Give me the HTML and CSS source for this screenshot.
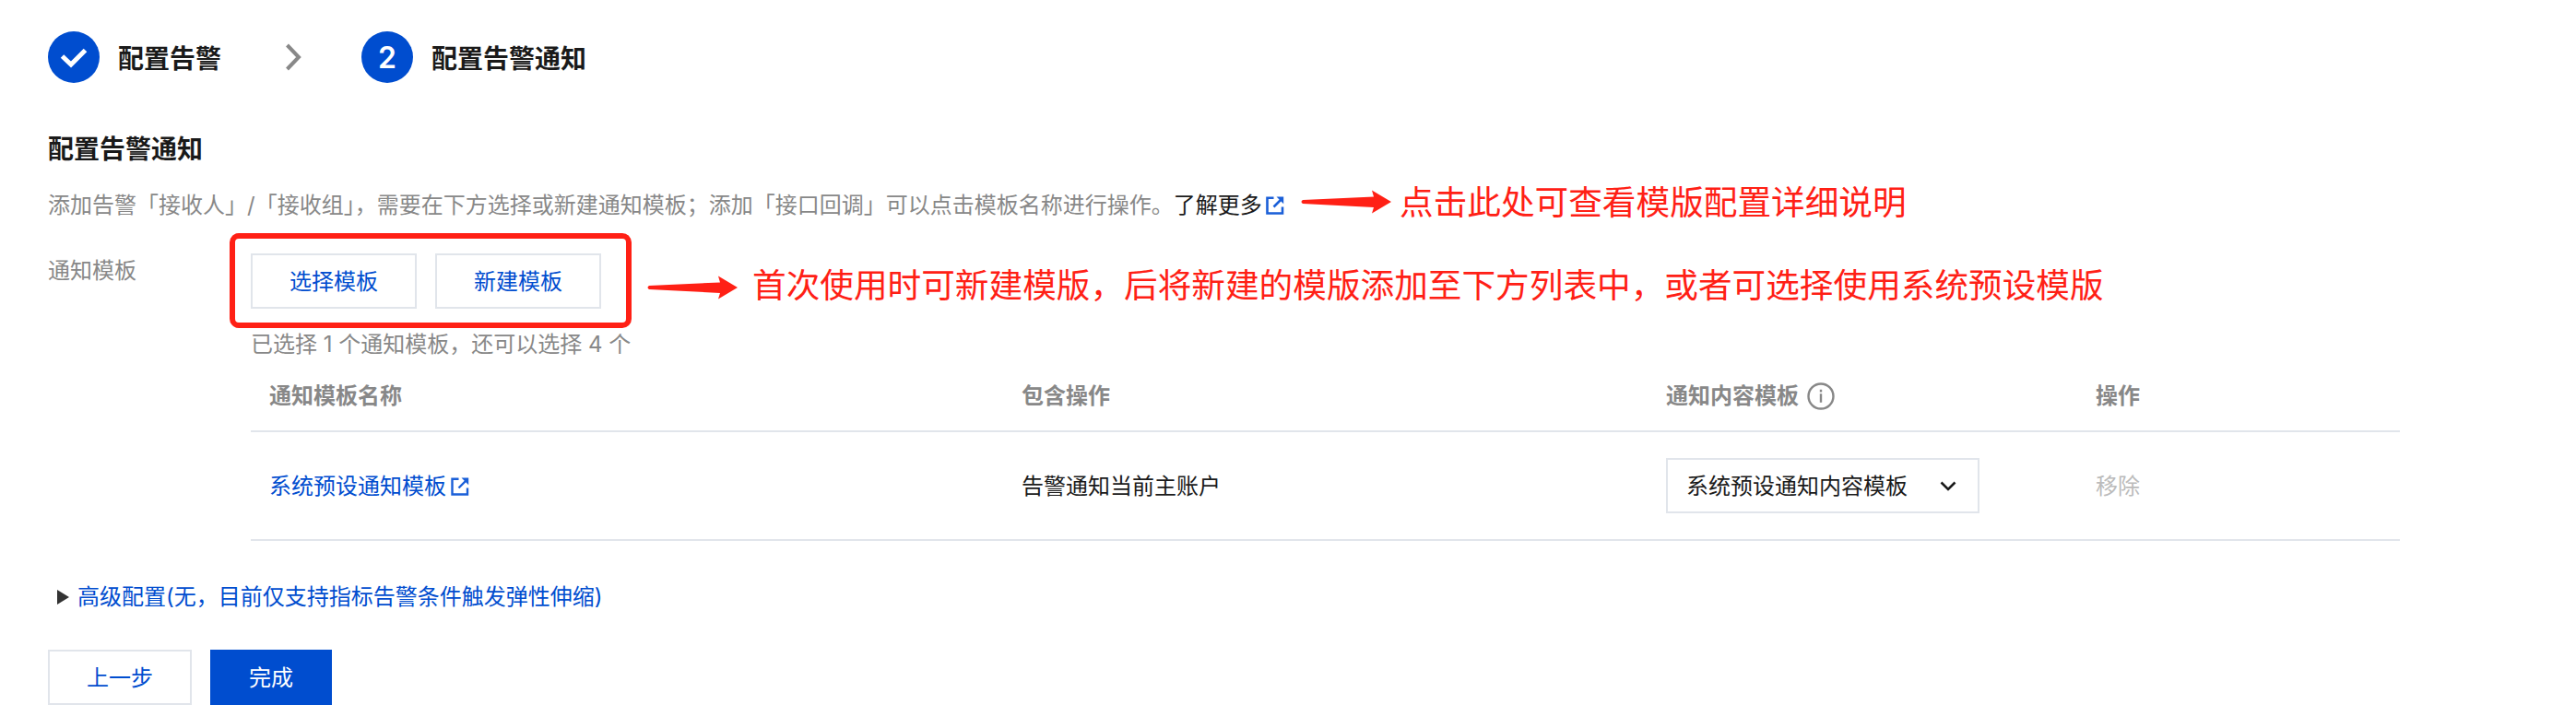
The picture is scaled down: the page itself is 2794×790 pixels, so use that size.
FILE: index.html
```html
<!DOCTYPE html>
<html lang="zh-CN">
<head>
  <meta charset="UTF-8" />
  <title>配置告警通知</title>
  <link rel="stylesheet" href="styles.css">
</head>
<body>
  <div class="steps">
    <span class="step-icon">
      <svg width="56" height="56" viewBox="0 0 56 56"><path d="M15.500 27L25 36L40.500 20.500" fill="none" stroke="#fff" stroke-width="5"/></svg>
    </span>
    <span class="step-title">配置告警</span>
    <svg class="step-arrow" width="20" height="30" viewBox="0 0 20 30"><path d="M3.500 2L16 15L3.500 28" fill="none" stroke="#888" stroke-width="4"/></svg>
    <span class="step-icon">2</span>
    <span class="step-title">配置告警通知</span>
  </div>

  <h3 class="title">配置告警通知</h3>
  <p class="desc">
    <span>添加告警「接收人」/「接收组」，需要在下方选择或新建通知模板；添加「接口回调」可以点击模板名称进行操作。</span><a class="more" href="#">了解更多</a>
    <svg class="icon-link" width="20" height="20" viewBox="0 0 20 20"><path d="M8.500 1.800H1.500v16.700h16.500V11.500M8.500 11.500L16 4" fill="none" stroke="#1a5fd8" stroke-width="2.600"/><path d="M11.500 0.600h7.700v7.700z" fill="#1a5fd8"/></svg>
  </p>

  <div class="form-item">
    <label class="form-label">通知模板</label>
    <div class="form-controls">
      <div class="btn-group">
        <button class="btn">选择模板</button>
        <button class="btn">新建模板</button>
      </div>
      <p class="hint">已选择 1 个通知模板，还可以选择 4 个</p>
      <div class="table">
        <div class="row head">
          <div>通知模板名称</div>
          <div>包含操作</div>
          <div>通知内容模板
            <svg class="icon-info" width="30" height="30" viewBox="0 0 30 30"><circle cx="15" cy="15" r="13.500" fill="none" stroke="#888" stroke-width="2.400"/><path d="M15 12.300V21.800M15 7.800v2.600" stroke="#888" stroke-width="2.400"/></svg>
          </div>
          <div>操作</div>
        </div>
        <div class="row">
          <div class="link">系统预设通知模板
            <svg class="icon-link" width="20" height="20" viewBox="0 0 20 20"><path d="M8.500 1.800H1.500v16.700h16.500V11.500M8.500 11.500L16 4" fill="none" stroke="#1a5fd8" stroke-width="2.400"/><path d="M11.500 0.600h7.700v7.700z" fill="#1a5fd8"/></svg>
          </div>
          <div>告警通知当前主账户</div>
          <div>
            <div class="select">系统预设通知内容模板
              <svg width="18" height="12" viewBox="0 0 18 12"><path d="M1.500 1.500L9 9L16.500 1.500" fill="none" stroke="#1a1a1a" stroke-width="2.600"/></svg>
            </div>
          </div>
          <div class="disabled">移除</div>
        </div>
      </div>
    </div>
  </div>

  <div class="advanced"><i class="caret"></i>高级配置(无，目前仅支持指标告警条件触发弹性伸缩)</div>

  <div class="footer">
    <button class="btn prev">上一步</button>
    <button class="btn primary">完成</button>
  </div>

  <!-- 标注 -->
  <div class="mark-box"></div>
  <div class="mark mark-more">
    <svg width="98" height="26" viewBox="0 0 98 26"><path d="M2 11L79 7.500L77 0.500L98 13L77 25.500L79 19L2 15Q-1 13 2 11z" fill="#ff2015"/></svg>
    <span>点击此处可查看模版配置详细说明</span>
  </div>
  <div class="mark mark-create">
    <svg width="98" height="26" viewBox="0 0 98 26"><path d="M2 11L79 7.500L77 0.500L98 13L77 25.500L79 19L2 15Q-1 13 2 11z" fill="#ff2015"/></svg>
    <span>首次使用时可新建模版，后将新建的模版添加至下方列表中，或者可选择使用系统预设模版</span>
  </div>
</body>
</html>
```
FILE: styles.css
```css
html, body {
  margin: 0;
  padding: 0;
}

body {
  position: relative;
  box-sizing: border-box;
  height: 790px;
  padding: 34px 52px 0;
  font-family: Inter, "Noto Sans CJK SC", sans-serif;
  font-size: 24px;
  line-height: 36px;
  color: #1a1a1a;
  background: #fff;
  overflow: hidden;
}

.steps {
  display: flex;
  align-items: center;
  height: 56px;
}

.step-icon {
  width: 56px;
  height: 56px;
  border-radius: 50%;
  background: #004dcf;
  color: #fff;
  font-size: 32px;
  font-weight: 600;
  line-height: 57px;
  text-align: center;
}

.step-icon svg {
  display: block;
}

.step-title {
  margin-left: 20px;
  padding-top: 3px;
  font-size: 28px;
  font-weight: bold;
}

.step-arrow {
  margin: 0 64px 0 68px;
}

.title {
  margin: 52px 0 0;
  font-size: 28px;
  font-weight: bold;
  line-height: 40px;
}

.desc {
  display: flex;
  align-items: center;
  margin: 23px 0 0;
  color: #888;
}

.more {
  color: #1a1a1a;
  text-decoration: none;
}

.icon-link {
  margin-left: 5px;
}

.desc .icon-link {
  margin-left: 4px;
}

.form-item {
  display: flex;
  margin-top: 34px;
}

.form-label {
  width: 220px;
  padding-top: 1px;
  color: #888;
}

.form-controls {
  width: 2331px;
}

.btn-group {
  display: flex;
  gap: 20px;
}

.btn {
  box-sizing: border-box;
  width: 180px;
  height: 60px;
  padding: 2px 0 0;
  border: 2px solid #e1e5eb;
  background: #fff;
  color: #004dcf;
  font: inherit;
}

.hint {
  margin: 21px 0 0;
  color: #888;
}

.row {
  box-sizing: border-box;
  display: grid;
  grid-template-columns: 816px 699px 466px 1fr;
  align-items: center;
  height: 118px;
  padding-left: 20px;
  border-bottom: 2px solid #e1e5eb;
}

.row > div {
  display: flex;
  align-items: center;
  padding-top: 2px;
}

.head {
  height: 77px;
  font-weight: bold;
  color: #888;
}

.head > div {
  padding-top: 0;
}

.icon-info {
  margin-left: 9px;
}

.link {
  color: #004dcf;
}

.disabled {
  color: #bbb;
}

.select {
  box-sizing: border-box;
  display: flex;
  align-items: center;
  justify-content: space-between;
  width: 340px;
  height: 60px;
  margin-top: -2px;
  padding: 2px 23px 0 20px;
  border: 2px solid #e1e5eb;
}

.advanced {
  display: flex;
  align-items: center;
  margin-top: 43px;
  padding-left: 10px;
  color: #004dcf;
}

.caret {
  margin-right: 9px;
  border: 8px solid transparent;
  border-left: 13px solid #333;
  border-right: 0;
}

.footer {
  display: flex;
  gap: 20px;
  margin-top: 39px;
}

.prev {
  width: 156px;
}

.primary {
  width: 132px;
  border-color: #004dcf;
  background: #004dcf;
  color: #fff;
}

/* 标注 */
.mark-box {
  position: absolute;
  left: 249px;
  top: 253px;
  box-sizing: border-box;
  width: 436px;
  height: 103px;
  border: 6px solid #ff2015;
  border-radius: 10px;
}

.mark {
  position: absolute;
  display: flex;
  align-items: center;
  font-size: 36.65px;
  line-height: 50px;
  color: #ff2015;
  white-space: nowrap;
}

.mark span {
  padding-top: 2px;
}

.mark-more {
  left: 1411px;
  top: 193px;
}

.mark-more span {
  margin-left: 9px;
}

.mark-create {
  left: 702px;
  top: 283px;
}

.mark-create svg {
  margin-top: 6px;
}

.mark-create span {
  margin-left: 16px;
}
```
